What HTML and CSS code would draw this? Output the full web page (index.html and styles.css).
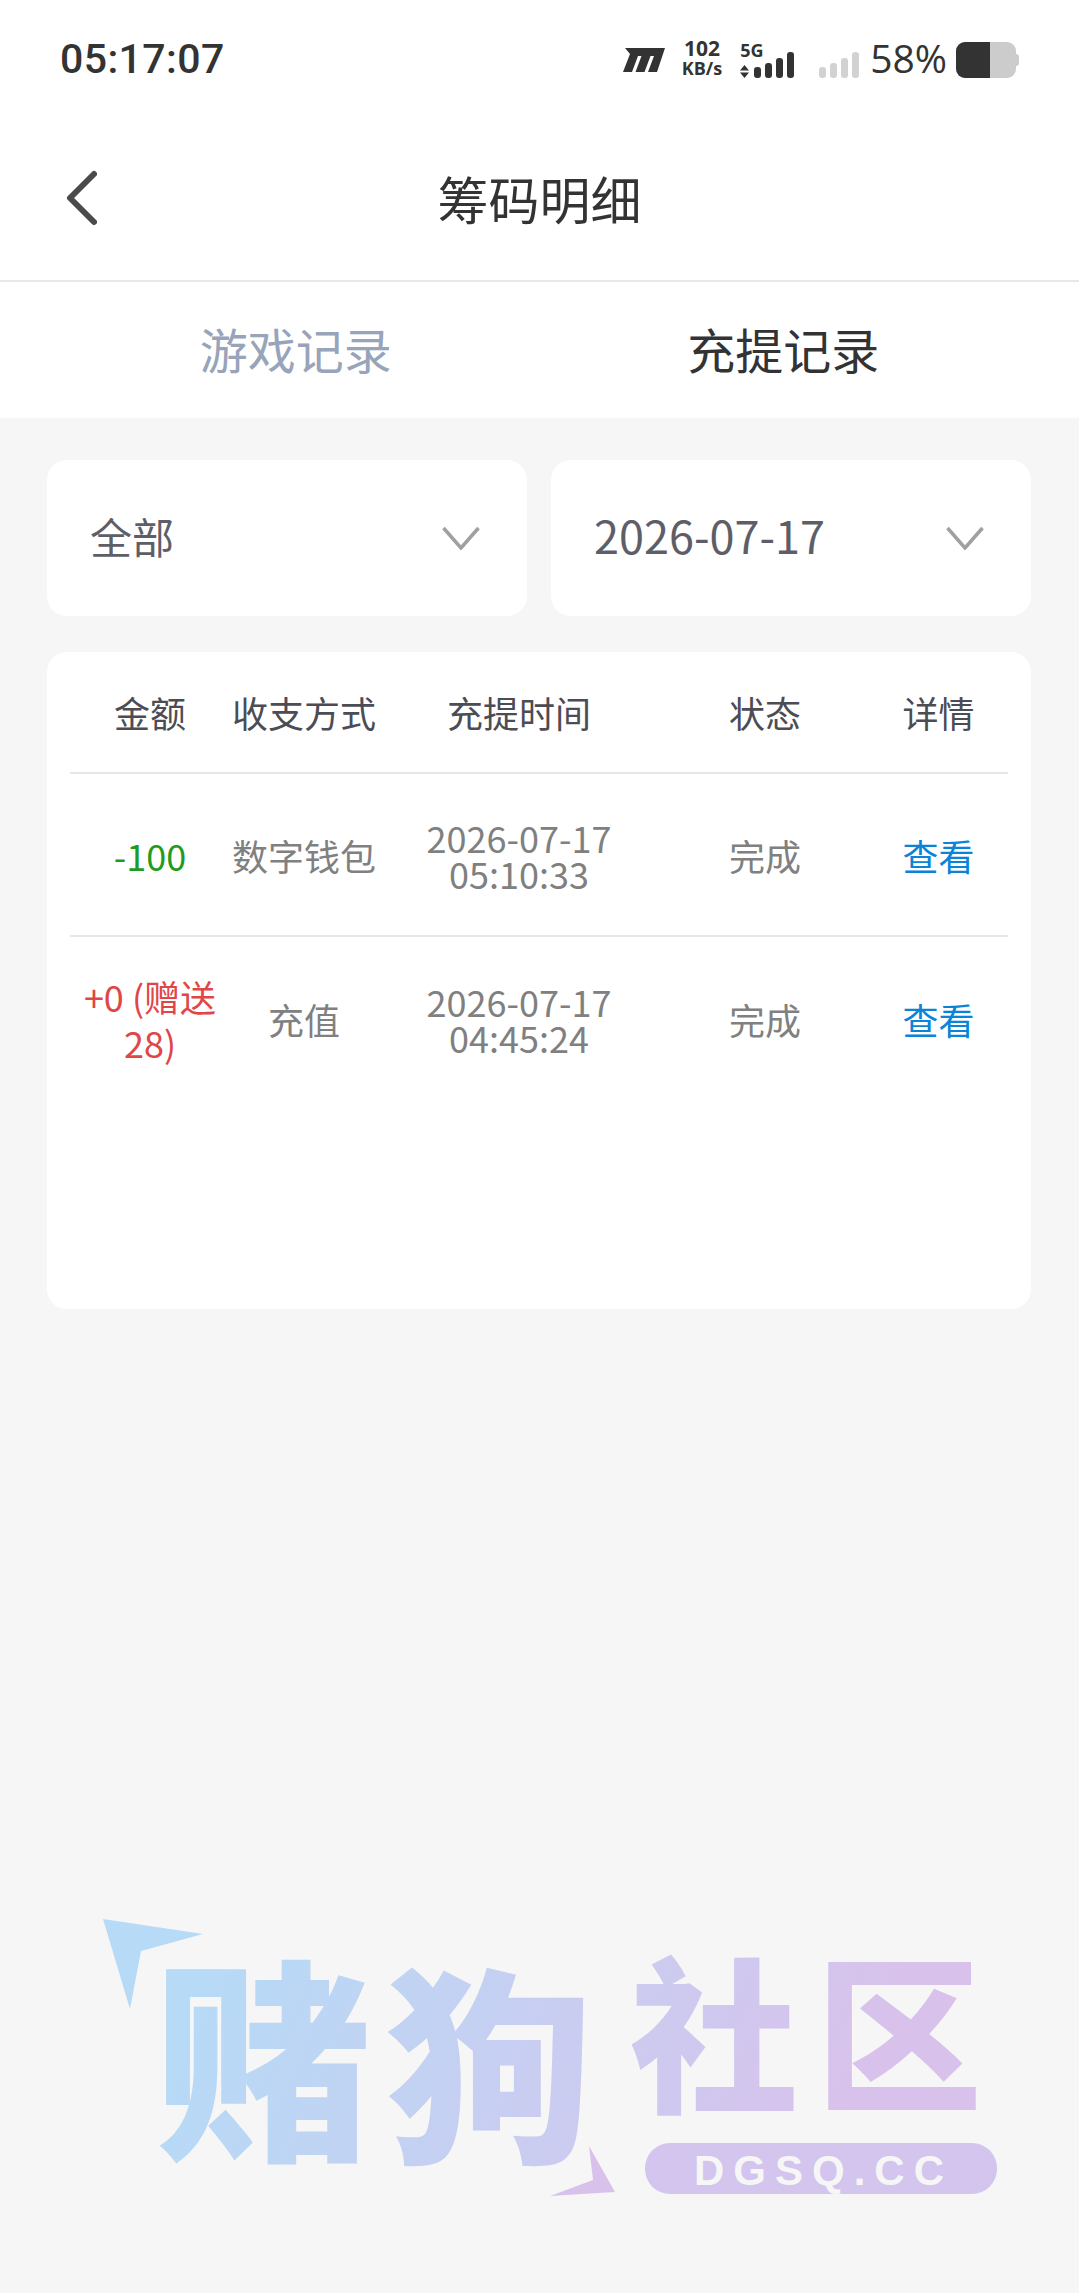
FILE: index.html
```html
<!DOCTYPE html>
<html lang="zh-CN">
<head>
    <meta charset="UTF-8">
    <meta name="viewport" content="width=device-width, initial-scale=1.0">
    <title>筹码明细</title>
    <link rel="stylesheet" href="styles.css">
</head>
<body>
    <div class="status-bar">
        <span class="clock">05:17:07</span>
        <div class="status-icons">
            <svg class="carrier" width="42" height="24" viewBox="0 0 42 24">
                <path d="M2 0H42L34 24H25L31 8H27.500L21.500 24H12.500L18.500 8H15L9 24H0L7 6Z" fill="#333"/>
            </svg>
            <div class="speed"><span class="speed-num">102</span><span>KB/s</span></div>
            <div class="sim">
                <span class="sim-label">5G</span>
                <svg width="54" height="26" viewBox="0 0 54 26">
                    <path d="M4.500 0L9 5.500H0ZM0 7.500H9L4.500 13Z" transform="translate(0 13)" fill="#333"/>
                    <rect x="14" y="15" width="7" height="11" rx="3" fill="#333"/>
                    <rect x="25" y="11" width="7" height="15" rx="3" fill="#333"/>
                    <rect x="36" y="6" width="7" height="20" rx="3" fill="#333"/>
                    <rect x="47" y="0" width="7" height="26" rx="3" fill="#333"/>
                </svg>
            </div>
            <svg class="sim-bars" width="40" height="26" viewBox="0 0 40 26">
                <rect x="0" y="15" width="7" height="11" rx="3" fill="#d2d2d2"/>
                <rect x="11" y="11" width="7" height="15" rx="3" fill="#d2d2d2"/>
                <rect x="22" y="6" width="7" height="20" rx="3" fill="#d2d2d2"/>
                <rect x="33" y="0" width="7" height="26" rx="3" fill="#d2d2d2"/>
            </svg>
            <span class="percent">58%</span>
            <div class="battery"><div class="battery-level" style="width: 57%"></div></div>
        </div>
    </div>

    <div class="nav">
        <svg class="back" width="32" height="56" viewBox="0 0 32 56">
            <path d="M29 4L5 28L29 52" fill="none" stroke="#4a4a4a" stroke-width="6" stroke-linecap="round" stroke-linejoin="round"/>
        </svg>
        <h1>筹码明细</h1>
    </div>

    <div class="tabs">
        <div class="tab">游戏记录</div>
        <div class="tab active">充提记录</div>
    </div>

    <div class="content">
        <div class="filters">
            <div class="select">
                <span class="select-label">全部</span>
                <svg width="38" height="24" viewBox="0 0 38 24"><path d="M1.500 2L19 22L36.500 2" fill="none" stroke="#a0a0a0" stroke-width="3.500"/></svg>
            </div>
            <div class="select">
                <span class="select-date">2026-07-17</span>
                <svg width="38" height="24" viewBox="0 0 38 24"><path d="M1.500 2L19 22L36.500 2" fill="none" stroke="#a0a0a0" stroke-width="3.500"/></svg>
            </div>
        </div>

        <div class="records">
            <div class="row head">
                <div>金额</div>
                <div>收支方式</div>
                <div>充提时间</div>
                <div>状态</div>
                <div>详情</div>
            </div>
            <div class="row line">
                <div class="out">-100</div>
                <div>数字钱包</div>
                <div class="time"><div>2026-07-17</div><div>05:10:33</div></div>
                <div>完成</div>
                <div class="link">查看</div>
            </div>
            <div class="row">
                <div class="in">+0 (赠送 28)</div>
                <div>充值</div>
                <div class="time"><div>2026-07-17</div><div>04:45:24</div></div>
                <div>完成</div>
                <div class="link">查看</div>
            </div>
        </div>
    </div>

    <!-- community watermark -->
    <svg class="watermark" width="1079" height="300" viewBox="0 1900 1079 300">
        <defs>
            <linearGradient id="mark" gradientUnits="userSpaceOnUse" x1="230" y1="1950" x2="800" y2="2200">
                <stop offset="0" stop-color="#b7daf6"/>
                <stop offset="1" stop-color="#d8c2ec"/>
            </linearGradient>
        </defs>
        <polygon points="103,1919 203,1934 141,1951 130,2009" fill="#b7daf6"/>
        <polygon points="589,2146 615,2192 550,2196 593,2180" fill="#d8c2ec"/>
        <g class="mark-text" fill="url(#mark)">
            <text x="156" y="2144" font-size="216">赌</text>
            <text x="386" y="2146" font-size="208">狗</text>
            <text x="630" y="2100" font-size="168">社</text>
            <text x="816" y="2098" font-size="166">区</text>
        </g>
        <rect x="645" y="2143" width="352" height="51" rx="25" fill="#d3c5ee"/>
        <text class="mark-url" x="694" y="2185">DGSQ.CC</text>
    </svg>
</body>
</html>
```

FILE: styles.css
```css
* {
    box-sizing: border-box;
}
body {
    margin: 0;
    height: 2293px;
    overflow: hidden;
    position: relative;
    font-family: "Noto Sans CJK SC", "Noto Sans", sans-serif;
    background-color: #f6f6f6;
    color: #333;
}

/* status bar */
.status-bar {
    height: 118px;
    padding: 0 60px;
    display: flex;
    align-items: center;
    justify-content: space-between;
    background-color: #fff;
}
.clock {
    font-family: Roboto, sans-serif;
    font-size: 41px;
    font-weight: 500;
    letter-spacing: 0.4px;
}
.status-icons {
    display: flex;
    align-items: flex-end;
    height: 36px;
    margin-top: 1px;
}
.carrier {
    margin-bottom: 6px;
}
.speed {
    display: flex;
    flex-direction: column;
    align-items: center;
    margin-left: 17px;
    font-family: "Open Sans", sans-serif;
    font-size: 18px;
    font-weight: 700;
    line-height: 20px;
}
.speed-num {
    font-size: 21px;
}
.sim {
    position: relative;
    margin-left: 18px;
    width: 54px;
    height: 36px;
}
.sim svg {
    position: absolute;
    left: 0;
    bottom: 0;
}
.sim-label {
    position: absolute;
    top: -2px;
    left: 0;
    font-family: "Open Sans", sans-serif;
    font-size: 18px;
    font-weight: 700;
    line-height: 20px;
}
.sim-bars {
    margin-left: 25px;
}
.percent {
    margin-left: 11px;
    margin-bottom: 1px;
    font-family: "Open Sans", sans-serif;
    font-size: 39px;
    line-height: 38px;
}
.battery {
    width: 60px;
    height: 36px;
    margin-left: 9px;
    margin-right: 3px;
    position: relative;
    border-radius: 9px;
    background-color: #ccc;
}
.battery::after {
    content: "";
    position: absolute;
    right: -3px;
    top: 12px;
    width: 3px;
    height: 12px;
    border-radius: 0 3px 3px 0;
    background-color: #ccc;
}
.battery-level {
    height: 100%;
    border-radius: 9px 0 0 9px;
    background-color: #333;
}

/* title bar */
.nav {
    height: 164px;
    padding-bottom: 2px;
    position: relative;
    display: flex;
    align-items: center;
    justify-content: center;
    background-color: #fff;
    border-bottom: 2px solid #e8e8e8;
}
.nav h1 {
    margin: 0;
    font-size: 51px;
    font-weight: 400;
}
.back {
    position: absolute;
    left: 65px;
    top: 52px;
}

.tabs {
    height: 136px;
    padding: 0 52px 4px;
    display: flex;
    align-items: center;
    justify-content: space-around;
    background-color: #fff;
    font-size: 48px;
    color: #97a4ba;
}
.tab.active {
    color: #333;
}

.content {
    padding: 42px 48px 42px 47px;
}
.filters {
    display: flex;
    gap: 24px;
}
.select {
    flex: 1;
    height: 156px;
    padding: 0 47px 0 43px;
    display: flex;
    align-items: center;
    justify-content: space-between;
    background-color: #fff;
    border-radius: 20px;
    color: #5e5e68;
}
.select-label {
    margin-bottom: 6px;
    font-size: 42px;
}
.select-date {
    margin-bottom: 7px;
    font-size: 45px;
}
.records {
    height: 657px;
    margin-top: 36px;
    padding: 0 23px;
    background-color: #fff;
    border-radius: 20px;
}
.row {
    height: 163px;
    display: grid;
    grid-template-columns: 160px 148px 282px 210px 137px;
    align-items: center;
    text-align: center;
    font-size: 36px;
    line-height: 36px;
    color: #808080;
}
.row.head {
    height: 122px;
    color: #4c4c54;
    border-bottom: 2px solid #e6e6ea;
}
.row.line {
    border-bottom: 2px solid #e6e6ea;
}
.out {
    color: #1f9c1f;
}
.in {
    color: #e04646;
    line-height: 46px;
}
.link {
    color: #0b84d8;
}

/* watermark */
.watermark {
    position: absolute;
    left: 0;
    top: 1900px;
    overflow: visible;
}
.mark-text {
    font-weight: 900;
}
.mark-url {
    font-family: "Liberation Sans", sans-serif;
    font-size: 42px;
    font-weight: 700;
    letter-spacing: 9px;
    fill: #f6f6f6;
}
```
